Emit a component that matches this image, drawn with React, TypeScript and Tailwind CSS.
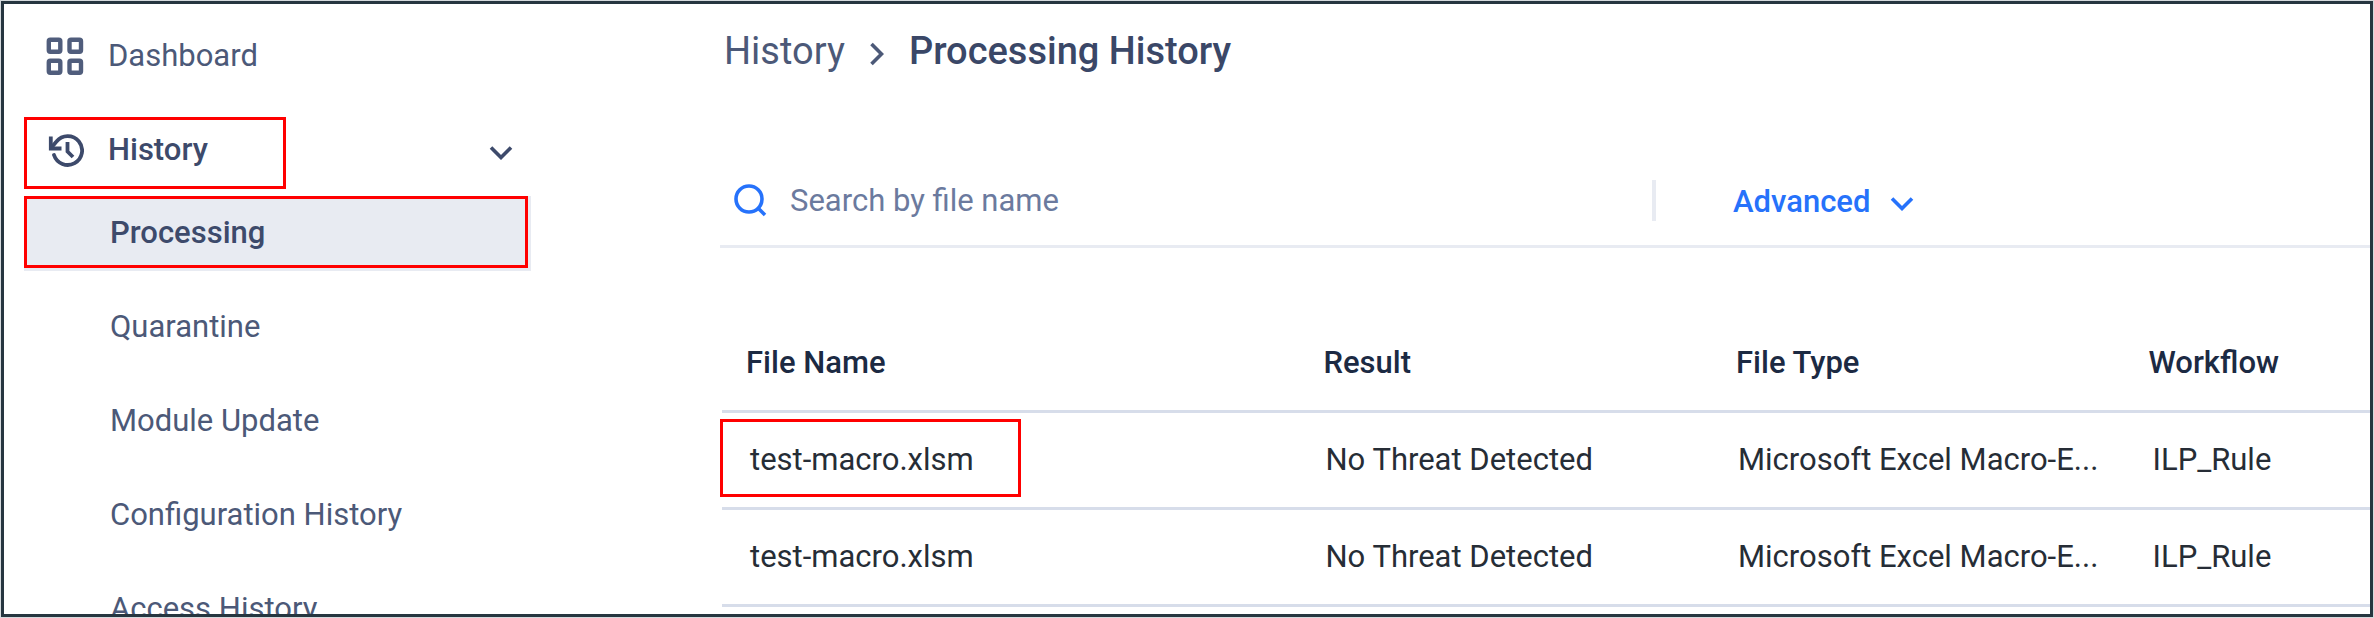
import { useState } from "react";

const historyNavigation = [
  { path: "#quarantine", label: "Quarantine" },
  { path: "#module-update", label: "Module Update" },
  { path: "#configuration-history", label: "Configuration History" },
  { path: "#access-history", label: "Access History" },
];

const columns = [
  { label: "File Name", width: "w-[35%]" },
  { label: "Result", width: "w-[25%]" },
  { label: "File Type", width: "w-[25%]" },
  { label: "Workflow", width: "w-[15%]" },
];

const files = [
  { id: 1, name: "test-macro.xlsm", result: "No Threat Detected", type: "Microsoft Excel Macro-E...", workflow: "ILP_Rule", marked: true },
  { id: 2, name: "test-macro.xlsm", result: "No Threat Detected", type: "Microsoft Excel Macro-E...", workflow: "ILP_Rule", marked: false },
];

function DashboardIcon() {
  return (
    <svg width="38" height="38" viewBox="0 0 38 38" fill="none" stroke="#505d7c" strokeWidth="4.4" aria-hidden="true">
      <rect x="2.8" y="2.8" width="11.5" height="12" rx="1.5" />
      <rect x="23.5" y="2.8" width="11.5" height="12" rx="1.5" />
      <rect x="2.8" y="23.8" width="11.5" height="12" rx="1.5" />
      <rect x="23.5" y="23.8" width="11.5" height="12" rx="1.5" />
    </svg>
  );
}

function HistoryIcon() {
  return (
    <svg width="38" height="38" viewBox="0 0 38 38" fill="none" stroke="#3d4a6b" strokeWidth="3.8" aria-hidden="true">
      <path d="M5 17 L10.5 10.5 A14.4 14.4 0 1 1 8 24" strokeLinecap="round" />
      <path d="M4.8 5.5 V17.5 H15.5" />
      <path d="M21.5 11 V20.5 L27 26" />
    </svg>
  );
}

function SearchIcon() {
  return (
    <svg width="34" height="34" viewBox="0 0 34 34" fill="none" stroke="#2672fb" strokeWidth="3.6" aria-hidden="true">
      <circle cx="15" cy="15" r="13" />
      <path d="M24.5 24.5 L31 31" />
    </svg>
  );
}

function Chevron({ className }: { className: string }) {
  return (
    <svg viewBox="0 0 24 14" fill="none" stroke="currentColor" strokeWidth="3.6" className={className} aria-hidden="true">
      <path d="M2 1.5 L12 11.5 L22 1.5" />
    </svg>
  );
}

// Red frame laid over an item
function Marker({ className }: { className: string }) {
  return <span className={`pointer-events-none absolute border-3 border-[#ff0000] ${className}`} />;
}

function Sidebar() {
  const [open, setOpen] = useState(true);

  return (
    <aside className="w-[716px] shrink-0 pt-1 text-[31px] leading-10 text-[#4c5978]">
      <nav>
        <a href="#dashboard" className="flex h-[94px] items-center gap-6 pt-0.5 pl-[42px]">
          <DashboardIcon />
          Dashboard
        </a>

        <button
          type="button"
          aria-expanded={open}
          onClick={() => setOpen(!open)}
          className="relative flex h-[94px] w-[509px] cursor-pointer items-center gap-6 pt-0.5 pl-[42px] text-left font-medium text-[#3d4a6b]"
        >
          <HistoryIcon />
          History
          <Chevron className="mt-1.5 ml-auto h-[14px] w-6" />
          <Marker className="top-[15px] left-5 h-[72px] w-[262px]" />
        </button>

        {open && (
          <ul>
            <li className="relative mb-2 ml-5 w-[507px]">
              <a
                href="#processing"
                aria-current="page"
                className="flex h-[75px] items-center bg-[#e8ebf2] pb-0.5 pl-[86px] font-medium text-[#3d4a6b]"
              >
                Processing
              </a>
              <Marker className="top-0 left-0 h-[72px] w-[504px]" />
            </li>
            {historyNavigation.map((item) => (
              <li key={item.path}>
                <a href={item.path} className="flex h-[94px] items-center pt-0.5 pl-[106px]">
                  {item.label}
                </a>
              </li>
            ))}
          </ul>
        )}
      </nav>
    </aside>
  );
}

function FileTable() {
  return (
    <table className="mt-16 ml-0.5 w-full table-fixed border-collapse text-left text-[31px] leading-10">
      <thead>
        <tr className="h-[99px] border-b-3 border-[#d7ddea] text-[#1c2a43]">
          {columns.map((col) => (
            <th key={col.label} scope="col" className={`pt-1 pl-6 font-medium whitespace-nowrap ${col.width}`}>
              {col.label}
            </th>
          ))}
        </tr>
      </thead>
      <tbody>
        {files.map((file) => (
          <tr key={file.id} className="h-[97px] border-b-3 border-[#d7ddea] whitespace-nowrap text-[#262d36]">
            <td className="relative pl-7">
              {file.name}
              {file.marked && <Marker className="top-1.5 -left-0.5 h-[78px] w-[301px]" />}
            </td>
            <td className="pl-[26px]">{file.result}</td>
            <td className="pl-[26px]">{file.type}</td>
            <td className="pl-7">{file.workflow}</td>
          </tr>
        ))}
      </tbody>
    </table>
  );
}

export default function App() {
  return (
    <div className="h-screen overflow-hidden bg-[#d5dadd] p-px font-['Roboto','Liberation_Sans',sans-serif]">
      <div className="flex h-full overflow-hidden border-3 border-[#263640] bg-white">
        <Sidebar />

        <main className="min-w-0 flex-1 overflow-hidden">
          <nav aria-label="Breadcrumb" className="flex h-[92px] items-center gap-5 pt-0.5 pl-1 text-[38px] leading-[48px]">
            <a href="#history" className="text-[#4c5978]">History</a>
            <Chevron className="mt-1.5 h-[14px] w-6 -rotate-90 text-[#4c5978]" />
            <h1 className="font-medium text-[#3a4767]">Processing History</h1>
          </nav>

          {/* Search bar */}
          <div className="mt-[60px] flex h-[92px] items-center border-b-3 border-[#e8ebf2] pl-3.5">
            <label htmlFor="file-search">
              <SearchIcon />
            </label>
            <input
              id="file-search"
              type="search"
              placeholder="Search by file name"
              className="ml-[22px] min-w-0 flex-1 text-[31px] leading-10 outline-none placeholder:text-[#6b7a9e]"
            />
            <div className="flex w-[718px] items-center">
              <span className="h-[41px] w-1 bg-[#e8ebf2]" />
              <button type="button" className="ml-[77px] flex cursor-pointer items-center gap-5 pt-0.5 text-[31px] leading-10 font-medium text-[#2672fb]">
                Advanced
                <Chevron className="mt-1 h-[14px] w-6" />
              </button>
            </div>
          </div>

          <FileTable />
        </main>
      </div>
    </div>
  );
}
